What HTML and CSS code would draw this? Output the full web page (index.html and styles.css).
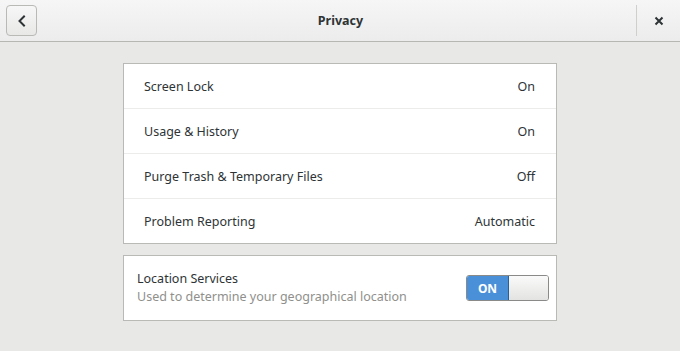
FILE: index.html
```html
<!DOCTYPE html>
<html>
<head>
<meta charset="utf-8">
<link rel="stylesheet" href="styles.css">
</head>
<body>
<div class="window">
  <header class="headerbar">
    <button class="back-btn" aria-label="Back">
      <svg width="16" height="16" viewBox="0 0 16 16"><path d="M10 3.5 L5.5 8 L10 12.5" fill="none" stroke="#2e3436" stroke-width="2" stroke-linecap="square"/></svg>
    </button>
    <div class="title">Privacy</div>
    <div class="sep"></div>
    <button class="close-btn" aria-label="Close">
      <svg width="10" height="10" viewBox="0 0 10 10"><path d="M1.5 1.5 L8.5 8.5 M8.5 1.5 L1.5 8.5" stroke="#2e3436" stroke-width="2"/></svg>
    </button>
  </header>
  <main class="content">
    <section class="card list">
      <div class="row"><span>Screen Lock</span><span>On</span></div>
      <div class="row"><span>Usage &amp; History</span><span>On</span></div>
      <div class="row"><span>Purge Trash &amp; Temporary Files</span><span>Off</span></div>
      <div class="row"><span>Problem Reporting</span><span>Automatic</span></div>
    </section>
    <section class="card location">
      <div class="loc-text">
        <div class="loc-title">Location Services</div>
        <div class="loc-sub">Used to determine your geographical location</div>
      </div>
      <div class="switch">
        <span class="switch-on">ON</span>
        <span class="switch-knob"></span>
      </div>
    </section>
  </main>
</div>
</body>
</html>
```
FILE: styles.css
```css
html, body {
  margin: 0;
  padding: 0;
}
body {
  width: 680px;
  height: 351px;
  background: #e8e8e7;
  font-family: "Noto Sans", "DejaVu Sans", sans-serif;
  font-size: 12.5px;
  color: #2e3436;
  overflow: hidden;
}
.window {
  display: flex;
  flex-direction: column;
  height: 351px;
}
.headerbar {
  height: 41px;
  border-bottom: 1px solid #b6b6b3;
  background: linear-gradient(#f6f6f6, #ececec);
  display: flex;
  align-items: center;
  padding: 0 6px;
  box-sizing: content-box;
}
.back-btn {
  width: 31px;
  height: 31px;
  border: 1px solid #b9b9b6;
  border-radius: 4px;
  background: linear-gradient(#f7f7f7, #e8e8e7);
  display: flex;
  align-items: center;
  justify-content: center;
  padding: 0;
}
.title {
  flex: 1;
  text-align: center;
  font-weight: bold;
  font-size: 12.5px;
  padding-left: 8px;
}
.sep {
  width: 1px;
  height: 31px;
  background: #cfcfcd;
  margin-right: 7px;
}
.close-btn {
  width: 30px;
  height: 30px;
  border: none;
  background: transparent;
  display: flex;
  align-items: center;
  justify-content: center;
  padding: 0;
}
.content {
  display: flex;
  flex-direction: column;
  align-items: center;
  padding-top: 21px;
  gap: 11px;
}
.card {
  width: 432px;
  background: #ffffff;
  border: 1px solid #b9b9b6;
}
.row {
  height: 44px;
  display: flex;
  align-items: center;
  justify-content: space-between;
  padding: 0 21px 0 20px;
  border-top: 1px solid #ececea;
}
.row:first-child {
  border-top: none;
}
.location {
  height: 64px;
  display: flex;
  align-items: center;
  justify-content: space-between;
  padding: 0 7px 0 13px;
  box-sizing: content-box;
  width: 412px;
}
.loc-title {
  line-height: 18px;
}
.loc-sub {
  color: #8f908c;
  line-height: 18px;
}
.switch {
  width: 81px;
  height: 24px;
  border: 1px solid #8a8b88;
  border-radius: 3px;
  display: flex;
  overflow: hidden;
}
.switch-on {
  width: 41px;
  background: #4a90d9;
  color: #ffffff;
  font-weight: bold;
  font-size: 12px;
  display: flex;
  align-items: center;
  justify-content: center;
  border-right: 1px solid #2d5f97;
}
.switch-knob {
  flex: 1;
  background: linear-gradient(#fafafa, #e3e3e1);
}
```
